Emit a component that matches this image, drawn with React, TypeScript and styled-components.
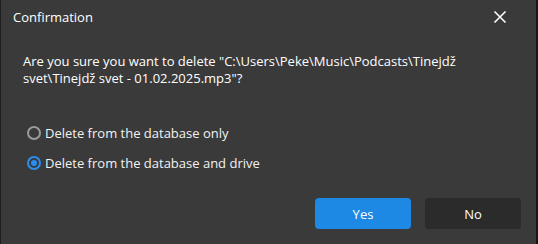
import styled, { createGlobalStyle } from "styled-components";

const Global = createGlobalStyle`
  html, body { margin: 0; padding: 0; background: #3a3a3a; }
  body { font-family: "Open Sans", "Noto Sans", sans-serif; }
`;

const Dialog = styled.div`
  width: 538px;
  height: 244px;
  box-sizing: border-box;
  background: #3a3a3a;
  border-left: 1px solid #1e1e1e;
  border-right: 2px solid #161616;
  display: flex;
  flex-direction: column;
  color: #f2f2f2;
  font-size: 13px;
`;

const Header = styled.div`
  height: 34px;
  display: flex;
  align-items: center;
  justify-content: space-between;
  padding: 0 29px 0 12px;
`;

const Title = styled.div`
  font-size: 13px;
  color: #ffffff;
`;

const Close = styled.button`
  background: none;
  border: none;
  padding: 0;
  width: 14px;
  height: 14px;
  display: flex;
  cursor: pointer;
`;

const Body = styled.div`
  padding: 19px 22px 0 22px;
  display: flex;
  flex-direction: column;
`;

const Message = styled.p`
  margin: 0;
  line-height: 17px;
  color: #ffffff;
`;

const Options = styled.div`
  margin-top: 37px;
  display: flex;
  flex-direction: column;
  gap: 12px;
  padding-left: 4px;
`;

const Option = styled.label`
  display: flex;
  align-items: center;
  gap: 4px;
  height: 18px;
  color: #f2f2f2;
  cursor: pointer;
`;

const Radio = styled.span<{ $checked?: boolean }>`
  width: 14px;
  height: 14px;
  box-sizing: border-box;
  border-radius: 50%;
  border: 2px solid ${(p) => (p.$checked ? "#2a8ef0" : "#9b9b9b")};
  display: flex;
  align-items: center;
  justify-content: center;
  &::after {
    content: "";
    width: 6px;
    height: 6px;
    border-radius: 50%;
    background: ${(p) => (p.$checked ? "#2a8ef0" : "transparent")};
  }
`;

const Footer = styled.div`
  margin-top: auto;
  display: flex;
  justify-content: flex-end;
  gap: 14px;
  padding: 0 15px 15px 0;
`;

const Button = styled.button<{ $primary?: boolean }>`
  width: 96px;
  height: 31px;
  border: none;
  border-radius: 4px;
  font-family: inherit;
  font-size: 13px;
  color: #ffffff;
  background: ${(p) => (p.$primary ? "#1e88e5" : "#2b2b2b")};
  cursor: pointer;
`;

export default function App() {
  return (
    <>
      <Global />
      <Dialog>
        <Header>
          <Title>Confirmation</Title>
          <Close aria-label="Close">
            <svg width="14" height="14" viewBox="0 0 14 14">
              <path d="M1.5 1.5 L12.5 12.5 M12.5 1.5 L1.5 12.5" stroke="#ffffff" strokeWidth="1.6" />
            </svg>
          </Close>
        </Header>
        <Body>
          <Message>
            Are you sure you want to delete "C:\Users\Peke\Music\Podcasts\Tinejdž
            <br />
            svet\Tinejdž svet - 01.02.2025.mp3"?
          </Message>
          <Options>
            <Option>
              <Radio />
              Delete from the database only
            </Option>
            <Option>
              <Radio $checked />
              Delete from the database and drive
            </Option>
          </Options>
        </Body>
        <Footer>
          <Button $primary>Yes</Button>
          <Button>No</Button>
        </Footer>
      </Dialog>
    </>
  );
}
